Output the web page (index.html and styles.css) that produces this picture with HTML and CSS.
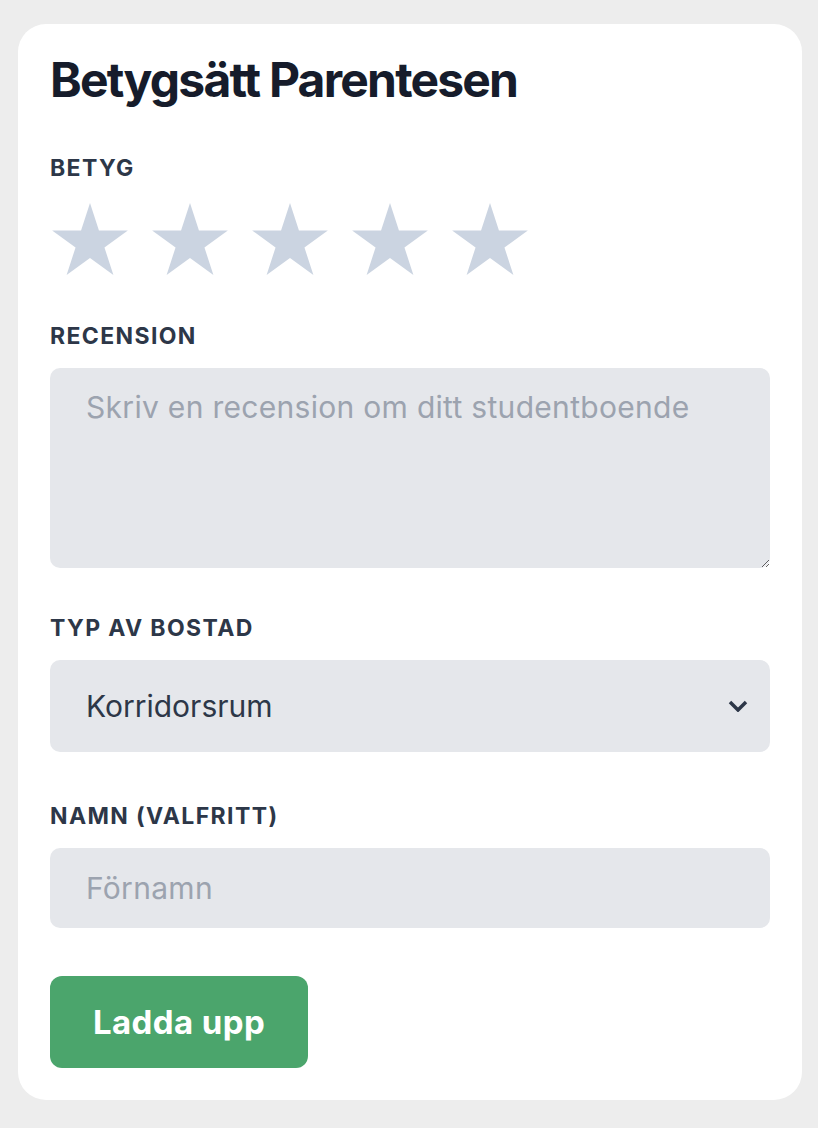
FILE: index.html
```html
<!DOCTYPE html>
<html lang="sv">
<head>
    <meta charset="UTF-8">
    <meta name="viewport" content="width=device-width, initial-scale=1.0">
    <title>Betygsätt Parentesen</title>
    <link rel="stylesheet" href="styles.css">
</head>
<body>
    <div class="review-card">
        <h1 class="review-title">Betygsätt Parentesen</h1>

        <!-- betyg med stjärnor -->
        <div class="field field-rating">
            <div class="field-label">Betyg</div>
            <div class="stars">
                <svg class="star" viewBox="2.45 0 95.1 90.45"><polygon points="50,0 61.23,34.55 97.55,34.55 68.16,55.9 79.39,90.45 50,69.1 20.61,90.45 31.84,55.9 2.45,34.55 38.77,34.55"/></svg>
                <svg class="star" viewBox="2.45 0 95.1 90.45"><polygon points="50,0 61.23,34.55 97.55,34.55 68.16,55.9 79.39,90.45 50,69.1 20.61,90.45 31.84,55.9 2.45,34.55 38.77,34.55"/></svg>
                <svg class="star" viewBox="2.45 0 95.1 90.45"><polygon points="50,0 61.23,34.55 97.55,34.55 68.16,55.9 79.39,90.45 50,69.1 20.61,90.45 31.84,55.9 2.45,34.55 38.77,34.55"/></svg>
                <svg class="star" viewBox="2.45 0 95.1 90.45"><polygon points="50,0 61.23,34.55 97.55,34.55 68.16,55.9 79.39,90.45 50,69.1 20.61,90.45 31.84,55.9 2.45,34.55 38.77,34.55"/></svg>
                <svg class="star" viewBox="2.45 0 95.1 90.45"><polygon points="50,0 61.23,34.55 97.55,34.55 68.16,55.9 79.39,90.45 50,69.1 20.61,90.45 31.84,55.9 2.45,34.55 38.77,34.55"/></svg>
            </div>
        </div>

        <div class="field field-review">
            <label class="field-label" for="review">Recension</label>
            <textarea id="review" class="review-text" placeholder="Skriv en recension om ditt studentboende"></textarea>
        </div>

        <div class="field">
            <label class="field-label" for="type">Typ av bostad</label>
            <div class="select-wrap">
                <select id="type" class="type-select">
                    <option>Korridorsrum</option>
                    <option>Lägenhet</option>
                </select>
                <svg class="select-arrow" viewBox="0 0 20 12"><polyline points="2,2 10,10 18,2"/></svg>
            </div>
        </div>

        <div class="field">
            <label class="field-label" for="name">Namn (valfritt)</label>
            <input id="name" class="name-input" type="text" placeholder="Förnamn">
        </div>

        <button class="submit-button">Ladda upp</button>
    </div>
</body>
</html>
```

FILE: styles.css
```css
body {
    margin: 0;
    padding: 24px 16px 28px 18px;
    background-color: #ededed;
    font-family: Inter, "Noto Sans", sans-serif;
}

/* kortet */
.review-card {
    width: 784px;
    box-sizing: border-box;
    background-color: #ffffff;
    border-radius: 28px;
    padding: 32px;
}

.review-title {
    margin: 0 0 48px;
    font-size: 48px;
    line-height: 48px;
    font-weight: 700;
    color: #161c2b;
    letter-spacing: -1.8px;
}

.field {
    margin-bottom: 48px;
}

.field-rating {
    margin-bottom: 45px;
}

.field-review {
    margin-bottom: 44px;
}

.field-label {
    display: block;
    font-size: 23px;
    line-height: 32px;
    font-weight: 700;
    text-transform: uppercase;
    letter-spacing: 0.06em;
    color: #2d3748;
    margin-bottom: 16px;
}

/* stjärnor */
.stars {
    display: flex;
    gap: 24px;
    margin-top: 19px;
    padding-left: 2px;
}

.star {
    width: 76px;
    height: 72px;
    fill: #cbd4e1;
}

.review-text,
.type-select,
.name-input {
    display: block;
    width: 100%;
    box-sizing: border-box;
    border: none;
    border-radius: 10px;
    background-color: #e5e7eb;
    font-family: Inter, "Noto Sans", sans-serif;
    font-size: 30px;
    color: #2d3748;
    outline: none;
}

.review-text {
    height: 200px;
    padding: 21px 36px;
    line-height: 36px;
    letter-spacing: 0.3px;
}

.review-text::placeholder,
.name-input::placeholder {
    color: #9ca3af;
}

/* select med egen pil */
.select-wrap {
    position: relative;
}

.type-select {
    appearance: none;
    height: 92px;
    padding: 0 36px;
}

.select-arrow {
    position: absolute;
    right: 22px;
    top: 40px;
    width: 20px;
    height: 12px;
    fill: none;
    stroke: #2d3748;
    stroke-width: 3.5;
    pointer-events: none;
}

.name-input {
    height: 80px;
    padding: 0 36px;
    letter-spacing: 0.3px;
}

.submit-button {
    height: 92px;
    padding: 0 43px;
    border: none;
    border-radius: 12px;
    background-color: #4ba56c;
    color: #ffffff;
    font-family: Inter, "Noto Sans", sans-serif;
    font-size: 33px;
    font-weight: 700;
    letter-spacing: 0.4px;
    cursor: pointer;
}
```
